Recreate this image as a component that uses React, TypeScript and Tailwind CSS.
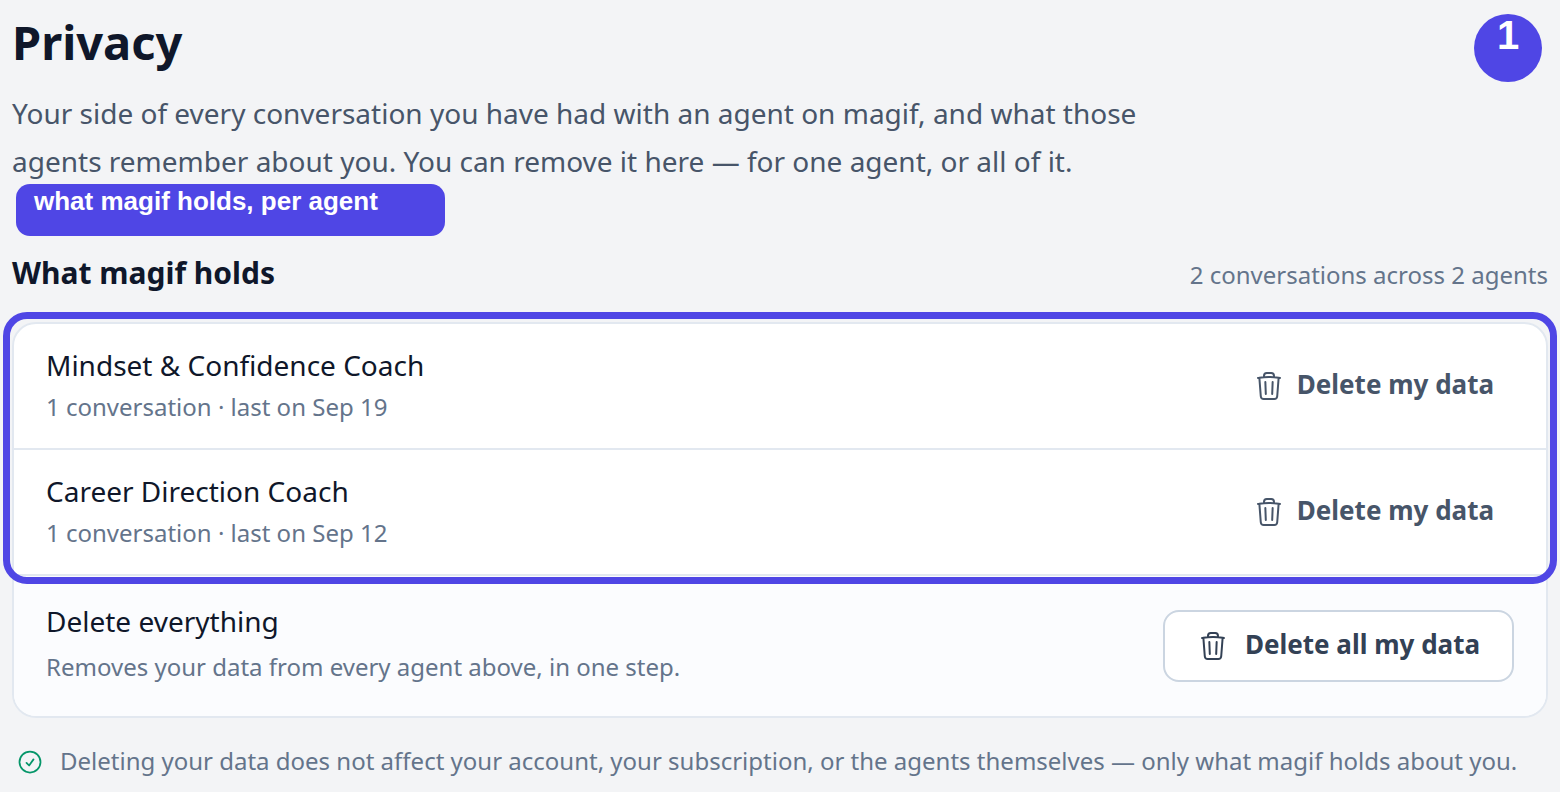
import { HiOutlineCheckCircle, HiOutlineTrash } from "react-icons/hi2";

interface AgentEntry {
  name: string;
  conversations: number;
  lastOn: string;
}

const AGENTS: AgentEntry[] = [
  { name: "Mindset & Confidence Coach", conversations: 1, lastOn: "Sep 19" },
  { name: "Career Direction Coach", conversations: 1, lastOn: "Sep 12" },
];

function AgentRow({ agent }: { agent: AgentEntry }) {
  return (
    <li className="flex items-center justify-between gap-6 border-b-2 border-[#e2e8f0] px-8 py-5">
      <div>
        <p className="text-[28px] leading-[42px] text-[#0f172a]">{agent.name}</p>
        <p className="text-2xl leading-[42px] text-[#64748b]">
          {agent.conversations} conversation · last on {agent.lastOn}
        </p>
      </div>
      <button
        type="button"
        className="flex shrink-0 items-center gap-3 rounded-2xl px-5 py-2 text-[26px] leading-[36px] font-bold text-[#475569]"
      >
        <HiOutlineTrash className="size-8" aria-hidden="true" />
        <span className="pb-1">Delete my data</span>
      </button>
    </li>
  );
}

export default function App() {
  const total = AGENTS.reduce((sum, agent) => sum + agent.conversations, 0);

  return (
    <main className="relative min-h-screen bg-gray-100 px-3 pt-3 pb-2 font-['Noto_Sans',sans-serif]">
      <h1 className="text-[47px] leading-[60px] font-bold text-[#0f172a]">Privacy</h1>
      <p className="mt-[17px] max-w-[1160px] text-[28px] leading-[48px] text-[#475569]">
        Your side of every conversation you have had with an agent on magif, and what those agents
        remember about you. You can remove it here — for one agent, or all of it.
      </p>

      <section className="relative pt-16">
        {/* Callout label for the list below */}
        <div className="absolute -top-px left-1 h-[52px] w-[429px] rounded-[14px] bg-[#4f46e5] px-[18px] font-['Liberation_Sans',sans-serif] text-[26px] leading-[34px] font-bold text-white">
          what magif holds, per agent
        </div>

        <div className="flex items-baseline justify-between">
          <h2 className="text-[30px] leading-[48px] font-bold text-[#0f172a]">What magif holds</h2>
          <span className="text-2xl text-[#64748b]">
            {total} conversations across {AGENTS.length} agents
          </span>
        </div>

        <div className="mt-[25px] rounded-3xl border-2 border-[#e2e8f0] bg-white">
          <div className="relative">
            <ul>
              {AGENTS.map((agent) => (
                <AgentRow key={agent.name} agent={agent} />
              ))}
            </ul>
            {/* Highlight ring */}
            <div className="pointer-events-none absolute -inset-x-[11px] -top-3 -bottom-2 rounded-3xl border-[7px] border-[#4f46e5]" />
          </div>

          <div className="flex items-center justify-between gap-6 rounded-b-[22px] bg-[#fbfcfe] px-8 py-6">
            <div>
              <p className="text-[28px] leading-[42px] text-[#0f172a]">Delete everything</p>
              <p className="text-2xl leading-[50px] text-[#64748b]">
                Removes your data from every agent above, in one step.
              </p>
            </div>
            <button
              type="button"
              className="flex shrink-0 items-center gap-4 rounded-2xl border-2 border-[#cbd5e1] bg-white px-8 py-[14px] text-[26px] leading-[36px] font-bold text-[#334155]"
            >
              <HiOutlineTrash className="size-8" aria-hidden="true" />
              <span className="pb-1">Delete all my data</span>
            </button>
          </div>
        </div>
      </section>

      <p className="mt-6 flex items-center gap-4 pl-1 text-2xl leading-[38px] text-[#64748b]">
        <HiOutlineCheckCircle className="size-7 shrink-0 text-[#059669]" aria-hidden="true" />
        <span className="pb-0.5">
          Deleting your data does not affect your account, your subscription, or the agents themselves — only
          what magif holds about you.
        </span>
      </p>

      {/* Step badge */}
      <div className="absolute top-[14px] right-[18px] size-[68px] rounded-full bg-[#4f46e5] text-center font-['Liberation_Sans',sans-serif] text-[40px] leading-[42px] font-bold text-white">
        1
      </div>
    </main>
  );
}
